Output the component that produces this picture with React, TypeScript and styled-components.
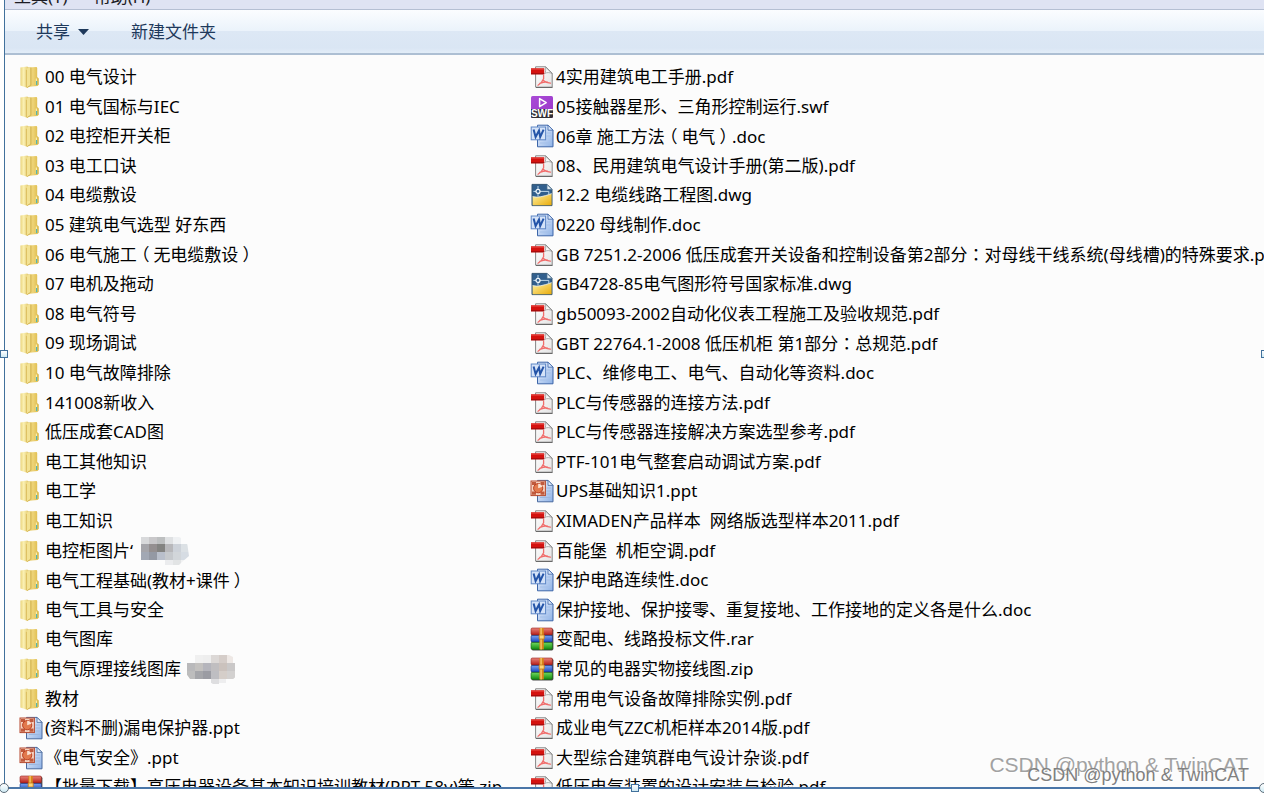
import React from 'react';
import styled, { createGlobalStyle } from 'styled-components';

const GlobalStyle = createGlobalStyle`
  * { box-sizing: border-box; }
  body {
    margin: 0;
    background: #fff;
    font-family: "Noto Sans", "Noto Sans CJK SC", sans-serif;
    font-size: 17px;
    overflow: hidden;
  }
`;

const Page = styled.div`
  height: 100vh;
  padding: 0 0 5px 4px;
  overflow: hidden;
`;

const Window = styled.main`
  position: relative;
  display: flex;
  flex-direction: column;
  height: 100%;
  border-left: 1px solid #41719c;
  border-bottom: 2px solid #4a76a8;
`;

const MenuBar = styled.nav`
  display: flex;
  align-items: flex-end;
  gap: 26px;
  height: 9px;
  padding: 0 0 4px 9px;
  overflow: hidden;
  background: #dfe3f3;
`;

const MenuButton = styled.button`
  flex: none;
  height: 16px;
  padding: 0;
  border: 0;
  background: none;
  color: #1c1c24;
  font: inherit;
  line-height: 16px;
`;

const Toolbar = styled.div`
  display: flex;
  flex: none;
  align-items: center;
  gap: 42px;
  height: 46px;
  padding-left: 31px;
  border-top: 1px solid #b5bfd3;
  border-bottom: 2px solid #adbfd3;
  background: linear-gradient(#fbfdff 0%, #ebf3fb 48%, #dde8f5 50%, #dae6f4 88%, #e2edf8 100%);
`;

const ToolButton = styled.button`
  display: flex;
  align-items: center;
  gap: 8px;
  padding: 0;
  border: 0;
  background: none;
  color: #1e395b;
  font: inherit;
  line-height: 24px;
`;

const FileList = styled.ul`
  display: grid;
  flex: 1;
  grid-template-columns: 511px minmax(0, 1fr);
  grid-template-rows: repeat(5, 30px 29px 30px 29px 30px);
  grid-auto-flow: column;
  min-height: 0;
  margin: 0;
  padding: 7px 0 0 14px;
  overflow: hidden;
  background: #fcfcfc;
  list-style: none;
`;

const FileRow = styled.li`
  display: flex;
  align-items: center;
  gap: 2px;
  min-width: 0;
  overflow: hidden;
  color: #000;
  line-height: 24px;
  white-space: pre;
`;

const Bracket = styled.span`
  margin: 0 4px;
  font-family: "Noto Sans CJK SC", sans-serif;
  font-feature-settings: "halt";
`;

const Colon = styled.span`
  font-family: "Noto Sans CJK TC", sans-serif;
`;

const Icon = styled.svg`
  flex: none;
  width: 24px;
  height: 24px;
`;

const Mosaic = styled.svg<{ $gap: number }>`
  flex: none;
  width: 54px;
  height: 30px;
  margin-left: ${(p) => p.$gap}px;
`;

const Handle = styled.span<{ $round?: boolean }>`
  position: absolute;
  width: ${(p) => (p.$round ? 10 : 8)}px;
  height: ${(p) => (p.$round ? 10 : 8)}px;
  border: 1px solid ${(p) => (p.$round ? '#5b6b78' : '#41719c')};
  border-radius: ${(p) => (p.$round ? '50%' : '0')};
  background: linear-gradient(#fff, #cfeaf3);
`;

const LeftHandle = styled(Handle)`
  top: 350px;
  left: -5px;
`;
const RightHandle = styled(Handle)`
  top: 350px;
  right: -5px;
`;
const BottomHandle = styled(Handle)`
  bottom: -5px;
  left: calc(50% - 4px);
`;
const LeftCorner = styled(Handle)`
  bottom: -6px;
  left: -6px;
`;
const RightCorner = styled(Handle)`
  bottom: -6px;
  right: -5px;
`;

const Watermark = styled.span<{ $size: number; $right: number; $bottom: number; $color: string }>`
  position: absolute;
  right: ${(p) => p.$right}px;
  bottom: ${(p) => p.$bottom}px;
  color: ${(p) => p.$color};
  font-family: "Liberation Sans", sans-serif;
  font-size: ${(p) => p.$size}px;
  line-height: 24px;
  text-shadow: 1px 1px 0 #fff;
  white-space: nowrap;
`;

type Kind = 'folder' | 'pdf' | 'swf' | 'doc' | 'dwg' | 'ppt' | 'zip';

const Gradients = () => (
  <svg width="0" height="0" style={{ display: 'block' }} aria-hidden="true">
    <defs>
      <linearGradient id="foldBack" x1="0" x2="1" y1="0" y2="0">
        <stop offset="0" stopColor="#dcbd58" />
        <stop offset="0.5" stopColor="#eed479" />
        <stop offset="1" stopColor="#dcb846" />
      </linearGradient>
      <linearGradient id="foldFront" x1="0" x2="1" y1="0" y2="0">
        <stop offset="0" stopColor="#ead47c" />
        <stop offset="0.4" stopColor="#fbf1b4" />
        <stop offset="1" stopColor="#e0c566" />
      </linearGradient>
      <linearGradient id="sheet" x1="0" x2="1" y1="0" y2="1">
        <stop offset="0" stopColor="#ffffff" />
        <stop offset="1" stopColor="#e4e4e4" />
      </linearGradient>
      <linearGradient id="blueSheet" x1="0" x2="1" y1="0" y2="1">
        <stop offset="0" stopColor="#f2f7ff" />
        <stop offset="1" stopColor="#8db1e6" />
      </linearGradient>
      <linearGradient id="red" x1="0" x2="0" y1="0" y2="1">
        <stop offset="0" stopColor="#e8837a" />
        <stop offset="1" stopColor="#b51d17" />
      </linearGradient>
      <linearGradient id="blue" x1="0" x2="0" y1="0" y2="1">
        <stop offset="0" stopColor="#7ba4f2" />
        <stop offset="1" stopColor="#1b45bd" />
      </linearGradient>
      <linearGradient id="green" x1="0" x2="0" y1="0" y2="1">
        <stop offset="0" stopColor="#71d85e" />
        <stop offset="1" stopColor="#108a10" />
      </linearGradient>
      <linearGradient id="gold" x1="0" x2="1" y1="0" y2="1">
        <stop offset="0" stopColor="#fff2a4" />
        <stop offset="1" stopColor="#e9ac0c" />
      </linearGradient>
      <linearGradient id="purple" x1="0" x2="1" y1="0" y2="1">
        <stop offset="0" stopColor="#a94bd6" />
        <stop offset="1" stopColor="#9a35c8" />
      </linearGradient>
    </defs>
  </svg>
);

const drawings: Record<Kind, React.ReactNode> = {
  folder: (
    <>
      <path d="M9 2.6 17.6 2 18.2 3v9l1.6 1.6v6.2l-1.4 1.2L8 22z" fill="url(#foldBack)" />
      <path d="M1.4 2.4 8.4 1.4 9.6 3v18.6L8 22.8 1.4 20.6z" fill="url(#foldFront)" />
      <path d="M7.6 4.6q0-1.2 1.6-1.6l2.6-.8v18L8.4 22.8H7.6z" fill="#f3e293" />
      <path d="M11.8 2.6v17.6L8.2 22.6" fill="none" stroke="#cba942" strokeWidth="0.8" />
      <path d="M7.4 4.8v17.4" stroke="#d5b654" strokeWidth="0.8" />
      <path d="M17.4 13.4v6.4" stroke="#f7edb0" strokeWidth="1.2" />
      <path d="M17.6 16v4" stroke="#55b5b0" strokeWidth="1.2" />
    </>
  ),
  pdf: (
    <>
      <path d="M5.6 1.8h10.2l6.4 6.4v14H5.6z" fill="url(#sheet)" stroke="#858585" strokeWidth="1" strokeLinejoin="round" />
      <path d="M6 22.5h16.5" stroke="#696969" strokeWidth="1" />
      <path d="M15.4 2c.6 2.8.2 5.4-.6 6.4 2.4-1.2 5-1 7.2.2z" fill="#f7f7f7" stroke="#999" strokeWidth="0.8" />
      <path d="M1 3.4h13.2v5.8H1z" fill="#d4120f" />
      <path d="M1 3.4h13.2v1.4H1z" fill="#e23b35" />
      <path d="M1 8h13.2v1.4H1z" fill="#a80c0c" />
      <path d="M13.6 10.4v3.4M13.6 13.8Q12 18 8 20.2M13.4 15.4q2.6 2.4 7 2.8M9.8 18.4q3.4-1.6 7.4-1.6" fill="none" stroke="#f06c6b" strokeWidth="1.3" strokeLinecap="round" />
    </>
  ),
  swf: (
    <>
      <rect x="1" y="1" width="22" height="22" rx="1.6" fill="url(#purple)" />
      <path d="M1 14h22v7.4q0 1.6-1.6 1.6H2.6Q1 23 1 21.4z" fill="#333035" />
      <path d="m9.6 3.6 6.6 4-6.6 4z" fill="none" stroke="#fff" strokeWidth="1.5" strokeLinejoin="round" />
      <text x="12" y="22" fill="#fff" fontFamily="Liberation Sans, sans-serif" fontSize="10" fontWeight="700" textAnchor="middle">SWF</text>
    </>
  ),
  doc: (
    <>
      <path d="M7.5 1.2H18l5 5v16.6H7.5z" fill="url(#blueSheet)" stroke="#3c65a8" strokeWidth="1" />
      <path d="M18 1.2v5h5z" fill="#dce9fc" stroke="#3c65a8" strokeWidth="0.8" />
      <path d="M16.5 9h4.5M16.5 12h4.5M10 19h11" stroke="#a3bfe8" strokeWidth="1" />
      <rect x="1.2" y="3" width="14.4" height="12.8" fill="#d5e3f8" stroke="#5e87c6" strokeWidth="1" />
      <path d="M3.6 5.6 5.6 13 9 6.6 10.2 13 13.6 5.6" fill="none" stroke="#2454a8" strokeWidth="2" />
    </>
  ),
  ppt: (
    <>
      <path d="M7.5 1.4H18l5 5v16.4H7.5z" fill="url(#blueSheet)" stroke="#48699e" strokeWidth="1" />
      <path d="M18 1.4v5h5z" fill="#e4eefc" stroke="#48699e" strokeWidth="0.8" />
      <path d="M16.5 9h4.5M16.5 12h4.5M16.5 15h4.5M10 18.5h11" stroke="#9db8e0" strokeWidth="1" />
      <rect x="1" y="2" width="14.4" height="14.6" fill="#f6d3c1" stroke="#b5492e" strokeWidth="1" />
      <path d="M2 3h4v3H2zM10.5 3h4v3h-4zM2 12.5h4v3.3H2zM10.5 12.5h4v3.3h-4z" fill="#c05a3d" />
      <circle cx="8.2" cy="9.2" r="4.6" fill="#e27a4e" stroke="#bb3f21" strokeWidth="1" />
      <path d="M8.2 9.2V4.8a4.4 4.4 0 0 1 4.2 3z" fill="#fbe4d5" />
    </>
  ),
  dwg: (
    <>
      <path d="M2 1.4h15l5 5V22.6H2z" fill="#315f8d" stroke="#335573" strokeWidth="1" />
      <path d="M2.6 13.6Q9 15.4 21.6 10.6V22.2h-19z" fill="url(#gold)" />
      <path d="M2.6 13.6Q9 15.4 21.6 10.6" fill="none" stroke="#e5edf2" strokeWidth="0.8" />
      <path d="M17 1.4v5h5z" fill="#e8f2f9" stroke="#4d708d" strokeWidth="0.8" />
      <path d="M8 3v10M3.4 8.4h15.4M18.8 8.4v3" stroke="#bcd7ea" strokeWidth="1" />
      <circle cx="8" cy="8.4" r="2" fill="#315f8d" stroke="#f4f9fc" strokeWidth="1.2" />
    </>
  ),
  zip: (
    <>
      <rect x="1.4" y="1.6" width="22" height="21.8" rx="1.6" fill="#4b4b4b" />
      <rect x="1" y="1" width="21.4" height="7" rx="1.4" fill="url(#red)" stroke="#97201b" strokeWidth="0.6" />
      <rect x="1" y="8.4" width="21.4" height="6.6" rx="1.4" fill="url(#blue)" stroke="#173386" strokeWidth="0.6" />
      <rect x="1" y="15.4" width="21.4" height="7" rx="1.4" fill="url(#green)" stroke="#14660f" strokeWidth="0.6" />
      <path d="M9.4 1h4.4v21.4H9.4z" fill="#d88418" />
      <path d="M10.4 1h1.4v21.4h-1.4z" fill="#f5c56a" />
      <path d="M9.2 8h5v4h-5z" fill="#ffd777" stroke="#c0761a" strokeWidth="0.8" />
    </>
  ),
};

type Tile = [x: number, y: number, w: number, h: number, fill: string];

const mosaicA: Tile[] = [
  [6, 1, 8, 7, '#d8d9db'], [14, 1, 8, 7, '#c9c8ca'], [22, 1, 8, 7, '#bdbfc0'], [30, 1, 8, 7, '#dfe1e3'], [38, 1, 8, 7, '#eff1f3'],
  [6, 8, 8, 8, '#a5a5aa'], [14, 8, 8, 8, '#948f90'], [22, 8, 8, 8, '#838381'], [30, 8, 8, 8, '#b8b8bb'], [38, 8, 8, 8, '#cdd2d9'], [46, 8, 8, 8, '#dce1e5'],
  [6, 16, 8, 8, '#a2a8b4'], [14, 16, 8, 8, '#9499a4'], [22, 16, 8, 8, '#b9bfcb'], [30, 16, 8, 8, '#c6c9cd'], [38, 16, 8, 8, '#d2d6da'], [46, 16, 8, 8, '#d6dce3'],
  [30, 24, 8, 5, '#ebecee'], [38, 24, 8, 6, '#e2e4e5'], [46, 24, 8, 6, '#f0f1f2'],
];

const mosaicB: Tile[] = [
  [10, 1, 8, 8, '#f0f0f0'], [18, 1, 8, 8, '#eeeeee'], [26, 1, 8, 8, '#dcd8d6'], [34, 1, 8, 8, '#d5cdc9'], [42, 1, 6, 8, '#eee8e5'],
  [2, 9, 8, 8, '#b9b9bb'], [10, 9, 8, 8, '#c3c1bf'], [18, 9, 8, 8, '#b5b5bc'], [26, 9, 8, 8, '#c0bec0'], [34, 9, 8, 8, '#cbc2bd'], [42, 9, 8, 8, '#cac8c8'],
  [2, 17, 8, 8, '#bdbdbd'], [10, 17, 8, 8, '#a5a6aa'], [18, 17, 8, 8, '#9b9ca3'], [26, 17, 8, 8, '#bebec2'], [34, 17, 8, 8, '#d5cec9'], [42, 17, 8, 8, '#d3d1d0'],
  [26, 25, 8, 5, '#dedee0'], [34, 25, 7, 4, '#eeeeef'],
];

const Redaction = ({ tiles, gap, id }: { tiles: Tile[]; gap: number; id: string }) => (
  <Mosaic $gap={gap} viewBox="0 0 54 30" aria-hidden="true">
    <clipPath id={id}>
      <path d="M6 1h38q9 3 9 12l1 7-7 6-4 4H28l-8-5H5L0 18V9h6z" />
    </clipPath>
    <g clipPath={`url(#${id})`}>
      {tiles.map(([x, y, w, h, fill]) => (
        <rect key={`${x}-${y}`} x={x} y={y} width={w} height={h} fill={fill} />
      ))}
    </g>
  </Mosaic>
);

/* Full-width brackets and colons sit in the middle of their cell. */
const FileName = ({ text }: { text: string }) => (
  <span>
    {text.split(/([（）：])/).map((part, i) => {
      if (part === '（' || part === '）') return <Bracket key={i}>{part}</Bracket>;
      if (part === '：') return <Colon key={i} lang="zh-TW">{part}</Colon>;
      return part;
    })}
  </span>
);

type FileItem = { kind: Kind; name: string; extra?: React.ReactNode };
const f = (kind: Kind, name: string, extra?: React.ReactNode): FileItem => ({ kind, name, extra });

const files: FileItem[] = [
  f('folder', '00 电气设计'),
  f('folder', '01 电气国标与IEC'),
  f('folder', '02 电控柜开关柜'),
  f('folder', '03 电工口诀'),
  f('folder', '04 电缆敷设'),
  f('folder', '05 建筑电气选型 好东西'),
  f('folder', '06 电气施工（无电缆敷设）'),
  f('folder', '07 电机及拖动'),
  f('folder', '08 电气符号'),
  f('folder', '09 现场调试'),
  f('folder', '10 电气故障排除'),
  f('folder', '141008新收入'),
  f('folder', '低压成套CAD图'),
  f('folder', '电工其他知识'),
  f('folder', '电工学'),
  f('folder', '电工知识'),
  f('folder', '电控柜图片‘', <Redaction id="maskA" tiles={mosaicA} gap={0} />),
  f('folder', '电气工程基础(教材+课件）'),
  f('folder', '电气工具与安全'),
  f('folder', '电气图库'),
  f('folder', '电气原理接线图库', <Redaction id="maskB" tiles={mosaicB} gap={2} />),
  f('folder', '教材'),
  f('ppt', '(资料不删)漏电保护器.ppt'),
  f('ppt', '《电气安全》.ppt'),
  f('zip', '【批量下载】高压电器设备基本知识培训教材(PPT 58y)等.zip'),
  f('pdf', '4实用建筑电工手册.pdf'),
  f('swf', '05接触器星形、三角形控制运行.swf'),
  f('doc', '06章 施工方法（电气）.doc'),
  f('pdf', '08、民用建筑电气设计手册(第二版).pdf'),
  f('dwg', '12.2 电缆线路工程图.dwg'),
  f('doc', '0220 母线制作.doc'),
  f('pdf', 'GB 7251.2-2006 低压成套开关设备和控制设备第2部分：对母线干线系统(母线槽)的特殊要求.pdf'),
  f('dwg', 'GB4728-85电气图形符号国家标准.dwg'),
  f('pdf', 'gb50093-2002自动化仪表工程施工及验收规范.pdf'),
  f('pdf', 'GBT 22764.1-2008 低压机柜 第1部分：总规范.pdf'),
  f('doc', 'PLC、维修电工、电气、自动化等资料.doc'),
  f('pdf', 'PLC与传感器的连接方法.pdf'),
  f('pdf', 'PLC与传感器连接解决方案选型参考.pdf'),
  f('pdf', 'PTF-101电气整套启动调试方案.pdf'),
  f('ppt', 'UPS基础知识1.ppt'),
  f('pdf', 'XIMADEN产品样本  网络版选型样本2011.pdf'),
  f('pdf', '百能堡  机柜空调.pdf'),
  f('doc', '保护电路连续性.doc'),
  f('doc', '保护接地、保护接零、重复接地、工作接地的定义各是什么.doc'),
  f('zip', '变配电、线路投标文件.rar'),
  f('zip', '常见的电器实物接线图.zip'),
  f('pdf', '常用电气设备故障排除实例.pdf'),
  f('pdf', '成业电气ZZC机柜样本2014版.pdf'),
  f('pdf', '大型综合建筑群电气设计杂谈.pdf'),
  f('pdf', '低压电气装置的设计安装与检验.pdf'),
];

export default function App() {
  return (
    <Page>
      <GlobalStyle />
      <Gradients />
      <Window>
        <MenuBar>
          <MenuButton type="button">工具(T)</MenuButton>
          <MenuButton type="button">帮助(H)</MenuButton>
        </MenuBar>
        <Toolbar>
          <ToolButton type="button">
            共享
            <svg width="11" height="6" viewBox="0 0 11 6" aria-hidden="true">
              <path d="M0 0h11L5.5 6z" fill="#1e395b" />
            </svg>
          </ToolButton>
          <ToolButton type="button">新建文件夹</ToolButton>
        </Toolbar>
        <FileList>
          {files.map((file) => (
            <FileRow key={file.name}>
              <Icon viewBox="0 0 24 24" aria-hidden="true">{drawings[file.kind]}</Icon>
              <FileName text={file.name} />
              {file.extra}
            </FileRow>
          ))}
        </FileList>
        <Watermark $size={21} $right={16} $bottom={10} $color="#a2a2a2">CSDN @python &amp; TwinCAT</Watermark>
        <Watermark $size={18} $right={15} $bottom={0} $color="#808080">CSDN @python &amp; TwinCAT</Watermark>
        <LeftHandle />
        <RightHandle />
        <BottomHandle />
        <LeftCorner $round />
        <RightCorner $round />
      </Window>
    </Page>
  );
}
